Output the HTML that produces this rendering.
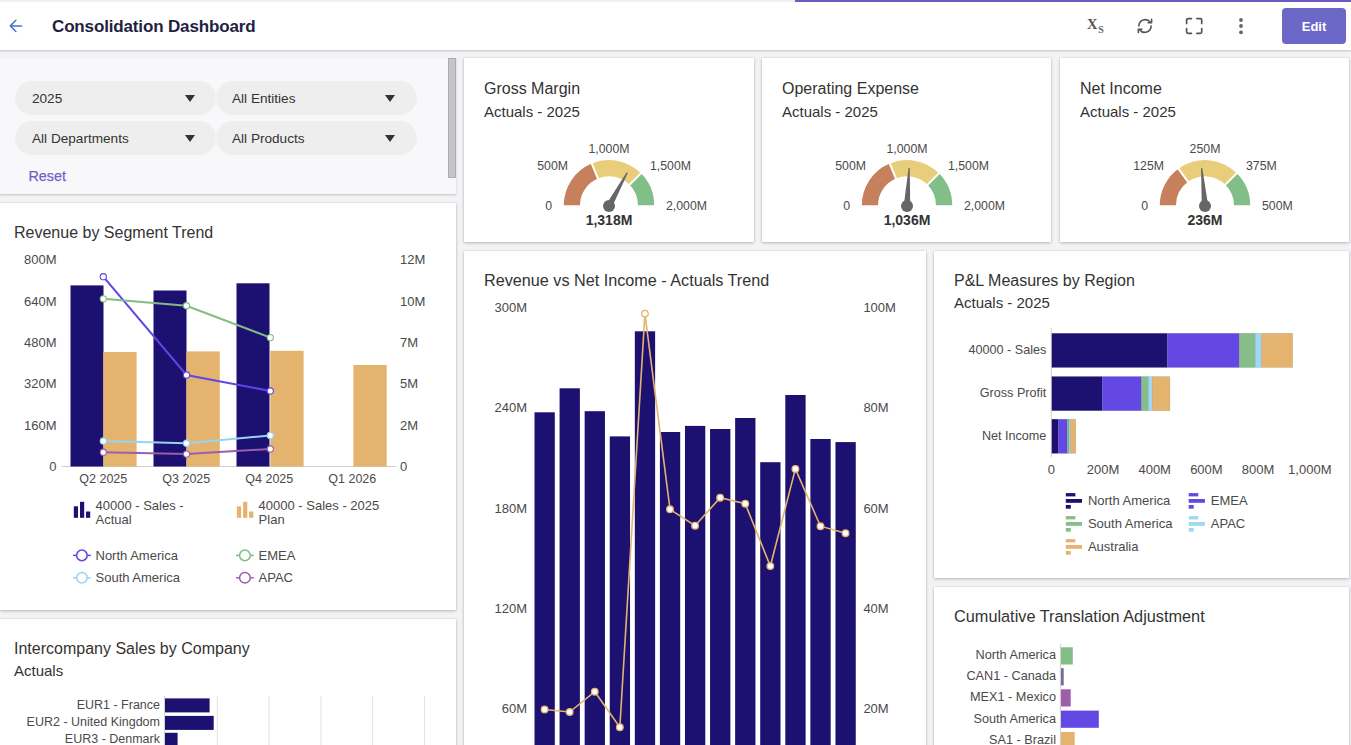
<!DOCTYPE html>
<html><head><meta charset="utf-8"><style>
html,body{margin:0;padding:0}
body{width:1351px;height:745px;overflow:hidden;background:#f3f3f5;font-family:"Liberation Sans", sans-serif;position:relative}
.card{position:absolute;background:#fff;box-shadow:0 1px 3px rgba(0,0,0,.24),0 0 1px rgba(0,0,0,.14)}
.hdr{position:absolute;left:0;top:0;width:1351px;height:50px;background:#fff;box-shadow:0 1px 2px rgba(0,0,0,.2)}
.strip{position:absolute;left:0;top:0;width:1351px;height:2px;background:#f0f0f0}
.prog{position:absolute;left:795px;top:0;width:556px;height:2px;background:#6d5cc4}
.panel{position:absolute;left:0;top:58px;width:456px;height:136px;background:#f8f8fa;box-shadow:0 1px 2px rgba(0,0,0,.2)}
.pill{position:absolute;height:34px;border-radius:17px;background:#eeeeee}
.tri{position:absolute;width:0;height:0;border-left:5.5px solid transparent;border-right:5.5px solid transparent;border-top:7px solid #333}
.sb{position:absolute;left:448px;top:58px;width:8px;height:120px;background:#c6c6c8;border:1px solid #adadaf;box-sizing:border-box}
.btn{position:absolute;left:1282px;top:8px;width:64px;height:36px;background:#6c68c8;border-radius:4px;color:#fff;font-weight:bold;font-size:13px;line-height:37.5px;text-align:center}
.ttl{position:absolute;left:52px;top:16.8px;font-size:17px;font-weight:bold;color:#1f1f3f;white-space:nowrap;letter-spacing:-0.15px}
.reset{position:absolute;left:28.5px;top:167.8px;font-size:14.3px;color:#6b63c9;-webkit-text-stroke:0.25px #6b63c9}
svg text{font-family:"Liberation Sans", sans-serif}
</style></head><body>
<div class="hdr"></div><div class="strip"></div><div class="prog"></div>
<svg style="position:absolute;left:0;top:0" width="60" height="50">
<path d="M21.6,25.9 H10.6 M15.9,20.3 L10.3,25.9 L15.9,31.5" fill="none" stroke="#4f6fd1" stroke-width="1.5" stroke-linecap="round" stroke-linejoin="round"/>
</svg>
<div class="ttl">Consolidation Dashboard</div>
<svg style="position:absolute;left:1080px;top:0" width="200" height="50">
<text x="7" y="29" style="font-family:'Liberation Serif'" font-weight="bold" font-size="14.5" fill="#555">X</text>
<text x="18.3" y="32.8" style="font-family:'Liberation Serif'" font-weight="bold" font-size="10" fill="#666">S</text>
<g fill="none" stroke="#555" stroke-width="1.6" stroke-linecap="round" stroke-linejoin="round">
<path d="M58.9,26 A6.3,6.3 0 0 1 70.3,22.3"/><path d="M71.1,26 A6.3,6.3 0 0 1 59.7,29.7"/>
<path d="M71.6,19.4 V22.8 H68.2"/><path d="M58.4,32.6 V29.2 H61.8"/>
</g>
<g fill="none" stroke="#555" stroke-width="1.7" stroke-linecap="round" stroke-linejoin="round">
<path d="M106.6,23.4 V19.9 Q106.6,18.6 107.9,18.6 H111.4 M116.9,18.6 H120.4 Q121.7,18.6 121.7,19.9 V23.4 M121.7,28.6 V32.1 Q121.7,33.4 120.4,33.4 H116.9 M111.4,33.4 H107.9 Q106.6,33.4 106.6,32.1 V28.6"/>
</g>
<g fill="#666"><circle cx="161" cy="20" r="1.9"/><circle cx="161" cy="26" r="1.9"/><circle cx="161" cy="32.3" r="1.9"/></g>
</svg>
<div class="btn">Edit</div>
<div class="panel"></div>
<div class="sb"></div>
<div class="pill" style="left:15px;top:81px;width:201px"></div>
<div class="pill" style="left:216px;top:81px;width:201px"></div>
<div class="pill" style="left:15px;top:121px;width:201px"></div>
<div class="pill" style="left:216px;top:121px;width:201px"></div>
<div class="tri" style="left:184.5px;top:95px"></div>
<div class="tri" style="left:384.5px;top:95px"></div>
<div class="tri" style="left:184.5px;top:135px"></div>
<div class="tri" style="left:384.5px;top:135px"></div>
<div class="reset">Reset</div>
<div class="card" style="left:0px;top:203px;width:456px;height:407px"></div><div class="card" style="left:0px;top:619px;width:456px;height:200px"></div><div class="card" style="left:464px;top:58px;width:290px;height:184px"></div><div class="card" style="left:762px;top:58px;width:289px;height:184px"></div><div class="card" style="left:1060px;top:58px;width:289px;height:184px"></div><div class="card" style="left:464px;top:251px;width:462px;height:600px"></div><div class="card" style="left:934px;top:251px;width:415px;height:327px"></div><div class="card" style="left:934px;top:587px;width:415px;height:300px"></div>
<svg style="position:absolute;left:0;top:0" width="1351" height="745">
<path d="M563.80,205.30 A45.2,45.2 0 0 1 591.70,163.54 L597.90,178.51 A29,29 0 0 0 580.00,205.30 Z" fill="#c6805b"/><path d="M591.70,163.54 A45.2,45.2 0 0 1 640.96,173.34 L629.51,184.79 A29,29 0 0 0 597.90,178.51 Z" fill="#e8ce7a"/><path d="M640.96,173.34 A45.2,45.2 0 0 1 654.20,205.30 L638.00,205.30 A29,29 0 0 0 629.51,184.79 Z" fill="#82bf88"/><line x1="598.28" y1="179.43" x2="591.32" y2="162.62" stroke="#fff" stroke-width="2"/><line x1="628.80" y1="185.50" x2="641.67" y2="172.63" stroke="#fff" stroke-width="2"/><path d="M606.19,204.47 L626.68,172.36 L627.73,172.93 L611.81,207.53 Z" fill="#666"/><circle cx="609" cy="206" r="6" fill="#666"/><text x="552" y="210" font-size="12.3" fill="#4a4a4a" text-anchor="end" font-weight="normal" >0</text><text x="568" y="170" font-size="12.3" fill="#4a4a4a" text-anchor="end" font-weight="normal" >500M</text><text x="609" y="153" font-size="12.3" fill="#4a4a4a" text-anchor="middle" font-weight="normal" >1,000M</text><text x="650" y="170" font-size="12.3" fill="#4a4a4a" text-anchor="start" font-weight="normal" >1,500M</text><text x="666" y="210" font-size="12.3" fill="#4a4a4a" text-anchor="start" font-weight="normal" >2,000M</text><text x="609" y="225" font-size="14" fill="#333" text-anchor="middle" font-weight="bold" >1,318M</text><path d="M861.80,205.30 A45.2,45.2 0 0 1 889.70,163.54 L895.90,178.51 A29,29 0 0 0 878.00,205.30 Z" fill="#c6805b"/><path d="M889.70,163.54 A45.2,45.2 0 0 1 938.96,173.34 L927.51,184.79 A29,29 0 0 0 895.90,178.51 Z" fill="#e8ce7a"/><path d="M938.96,173.34 A45.2,45.2 0 0 1 952.20,205.30 L936.00,205.30 A29,29 0 0 0 927.51,184.79 Z" fill="#82bf88"/><line x1="896.28" y1="179.43" x2="889.32" y2="162.62" stroke="#fff" stroke-width="2"/><line x1="926.80" y1="185.50" x2="939.67" y2="172.63" stroke="#fff" stroke-width="2"/><path d="M903.81,205.82 L908.55,168.03 L909.75,168.09 L910.19,206.18 Z" fill="#666"/><circle cx="907" cy="206" r="6" fill="#666"/><text x="850" y="210" font-size="12.3" fill="#4a4a4a" text-anchor="end" font-weight="normal" >0</text><text x="866" y="170" font-size="12.3" fill="#4a4a4a" text-anchor="end" font-weight="normal" >500M</text><text x="907" y="153" font-size="12.3" fill="#4a4a4a" text-anchor="middle" font-weight="normal" >1,000M</text><text x="948" y="170" font-size="12.3" fill="#4a4a4a" text-anchor="start" font-weight="normal" >1,500M</text><text x="964" y="210" font-size="12.3" fill="#4a4a4a" text-anchor="start" font-weight="normal" >2,000M</text><text x="907" y="225" font-size="14" fill="#333" text-anchor="middle" font-weight="bold" >1,036M</text><path d="M1159.80,205.30 A45.2,45.2 0 0 1 1178.43,168.73 L1187.95,181.84 A29,29 0 0 0 1176.00,205.30 Z" fill="#c6805b"/><path d="M1178.43,168.73 A45.2,45.2 0 0 1 1236.76,173.14 L1225.38,184.67 A29,29 0 0 0 1187.95,181.84 Z" fill="#e8ce7a"/><path d="M1236.76,173.14 A45.2,45.2 0 0 1 1250.20,205.30 L1234.00,205.30 A29,29 0 0 0 1225.38,184.67 Z" fill="#82bf88"/><line x1="1188.54" y1="182.65" x2="1177.84" y2="167.92" stroke="#fff" stroke-width="2"/><line x1="1224.67" y1="185.38" x2="1237.46" y2="172.43" stroke="#fff" stroke-width="2"/><path d="M1201.81,206.28 L1201.06,168.20 L1202.26,168.09 L1208.19,205.72 Z" fill="#666"/><circle cx="1205" cy="206" r="6" fill="#666"/><text x="1148" y="210" font-size="12.3" fill="#4a4a4a" text-anchor="end" font-weight="normal" >0</text><text x="1164" y="170" font-size="12.3" fill="#4a4a4a" text-anchor="end" font-weight="normal" >125M</text><text x="1205" y="153" font-size="12.3" fill="#4a4a4a" text-anchor="middle" font-weight="normal" >250M</text><text x="1246" y="170" font-size="12.3" fill="#4a4a4a" text-anchor="start" font-weight="normal" >375M</text><text x="1262" y="210" font-size="12.3" fill="#4a4a4a" text-anchor="start" font-weight="normal" >500M</text><text x="1205" y="225" font-size="14" fill="#333" text-anchor="middle" font-weight="bold" >236M</text><text x="56.5" y="471.1" font-size="13" fill="#4a4a4a" text-anchor="end" font-weight="normal" >0</text><text x="400" y="471.1" font-size="13" fill="#4a4a4a" text-anchor="start" font-weight="normal" >0</text><text x="56.5" y="429.74" font-size="13" fill="#4a4a4a" text-anchor="end" font-weight="normal" >160M</text><text x="400" y="429.74" font-size="13" fill="#4a4a4a" text-anchor="start" font-weight="normal" >2M</text><text x="56.5" y="388.38" font-size="13" fill="#4a4a4a" text-anchor="end" font-weight="normal" >320M</text><text x="400" y="388.38" font-size="13" fill="#4a4a4a" text-anchor="start" font-weight="normal" >5M</text><text x="56.5" y="347.02" font-size="13" fill="#4a4a4a" text-anchor="end" font-weight="normal" >480M</text><text x="400" y="347.02" font-size="13" fill="#4a4a4a" text-anchor="start" font-weight="normal" >7M</text><text x="56.5" y="305.66" font-size="13" fill="#4a4a4a" text-anchor="end" font-weight="normal" >640M</text><text x="400" y="305.66" font-size="13" fill="#4a4a4a" text-anchor="start" font-weight="normal" >10M</text><text x="56.5" y="264.3" font-size="13" fill="#4a4a4a" text-anchor="end" font-weight="normal" >800M</text><text x="400" y="264.3" font-size="13" fill="#4a4a4a" text-anchor="start" font-weight="normal" >12M</text><line x1="61.5" y1="466.5" x2="396" y2="466.5" stroke="#cfcfcf" stroke-width="1" /><rect x="70.50" y="285.40" width="33.00" height="181.10" fill="#1c1070" /><rect x="153.50" y="290.50" width="33.00" height="176.00" fill="#1c1070" /><rect x="236.50" y="283.30" width="33.00" height="183.20" fill="#1c1070" /><rect x="103.30" y="352.00" width="33.30" height="114.50" fill="#e4b46f" /><rect x="186.50" y="351.40" width="33.30" height="115.10" fill="#e4b46f" /><rect x="270.30" y="350.80" width="33.30" height="115.70" fill="#e4b46f" /><rect x="353.40" y="365.00" width="33.30" height="101.50" fill="#e4b46f" /><polyline points="103.3,276.7 186.5,375 270.3,391" fill="none" stroke="#5f46e6" stroke-width="2"/><circle cx="103.3" cy="276.7" r="3.1" fill="#fff" stroke="#5f46e6" stroke-width="1.1"/><circle cx="186.5" cy="375" r="3.1" fill="#fff" stroke="#5f46e6" stroke-width="1.1"/><circle cx="270.3" cy="391" r="3.1" fill="#fff" stroke="#5f46e6" stroke-width="1.1"/><polyline points="103.3,298.8 186.5,305.7 270.3,337.6" fill="none" stroke="#80bd82" stroke-width="2"/><circle cx="103.3" cy="298.8" r="3.1" fill="#fff" stroke="#80bd82" stroke-width="1.1"/><circle cx="186.5" cy="305.7" r="3.1" fill="#fff" stroke="#80bd82" stroke-width="1.1"/><circle cx="270.3" cy="337.6" r="3.1" fill="#fff" stroke="#80bd82" stroke-width="1.1"/><polyline points="103.3,441 186.5,443.2 270.3,435.5" fill="none" stroke="#96d4f4" stroke-width="2"/><circle cx="103.3" cy="441" r="3.1" fill="#fff" stroke="#96d4f4" stroke-width="1.1"/><circle cx="186.5" cy="443.2" r="3.1" fill="#fff" stroke="#96d4f4" stroke-width="1.1"/><circle cx="270.3" cy="435.5" r="3.1" fill="#fff" stroke="#96d4f4" stroke-width="1.1"/><polyline points="103.3,452.2 186.5,454.1 270.3,449" fill="none" stroke="#9c5cb0" stroke-width="2"/><circle cx="103.3" cy="452.2" r="3.1" fill="#fff" stroke="#9c5cb0" stroke-width="1.1"/><circle cx="186.5" cy="454.1" r="3.1" fill="#fff" stroke="#9c5cb0" stroke-width="1.1"/><circle cx="270.3" cy="449" r="3.1" fill="#fff" stroke="#9c5cb0" stroke-width="1.1"/><text x="103.3" y="483" font-size="12.5" fill="#4a4a4a" text-anchor="middle" font-weight="normal" >Q2 2025</text><text x="186.3" y="483" font-size="12.5" fill="#4a4a4a" text-anchor="middle" font-weight="normal" >Q3 2025</text><text x="269.3" y="483" font-size="12.5" fill="#4a4a4a" text-anchor="middle" font-weight="normal" >Q4 2025</text><text x="352.3" y="483" font-size="12.5" fill="#4a4a4a" text-anchor="middle" font-weight="normal" >Q1 2026</text><rect x="73.80" y="506.30" width="4.20" height="11.50" fill="#1c1070" /><rect x="80.00" y="501.80" width="4.20" height="16.00" fill="#1c1070" /><rect x="86.00" y="511.50" width="4.20" height="6.30" fill="#1c1070" /><text x="95.5" y="509.8" font-size="13" fill="#4a4a4a" text-anchor="start" font-weight="normal" >40000 - Sales -</text><text x="95.5" y="523.7" font-size="13" fill="#4a4a4a" text-anchor="start" font-weight="normal" >Actual</text><rect x="236.90" y="506.30" width="4.20" height="11.50" fill="#e4b46f" /><rect x="243.10" y="501.80" width="4.20" height="16.00" fill="#e4b46f" /><rect x="249.10" y="511.50" width="4.20" height="6.30" fill="#e4b46f" /><text x="258.6" y="509.8" font-size="13" fill="#4a4a4a" text-anchor="start" font-weight="normal" >40000 - Sales - 2025</text><text x="258.6" y="523.7" font-size="13" fill="#4a4a4a" text-anchor="start" font-weight="normal" >Plan</text><line x1="73" y1="555.4" x2="90.8" y2="555.4" stroke="#5f46e6" stroke-width="1.5" /><circle cx="81.9" cy="555.4" r="5.3" fill="#fff" stroke="#5f46e6" stroke-width="1.5"/><text x="95.5" y="559.9" font-size="13" fill="#4a4a4a" text-anchor="start" font-weight="normal" >North America</text><line x1="236" y1="555.4" x2="253.8" y2="555.4" stroke="#80bd82" stroke-width="1.5" /><circle cx="244.9" cy="555.4" r="5.3" fill="#fff" stroke="#80bd82" stroke-width="1.5"/><text x="258.5" y="559.9" font-size="13" fill="#4a4a4a" text-anchor="start" font-weight="normal" >EMEA</text><line x1="73" y1="577.8" x2="90.8" y2="577.8" stroke="#96d4f4" stroke-width="1.5" /><circle cx="81.9" cy="577.8" r="5.3" fill="#fff" stroke="#96d4f4" stroke-width="1.5"/><text x="95.5" y="582.3" font-size="13" fill="#4a4a4a" text-anchor="start" font-weight="normal" >South America</text><line x1="236" y1="577.8" x2="253.8" y2="577.8" stroke="#9c5cb0" stroke-width="1.5" /><circle cx="244.9" cy="577.8" r="5.3" fill="#fff" stroke="#9c5cb0" stroke-width="1.5"/><text x="258.5" y="582.3" font-size="13" fill="#4a4a4a" text-anchor="start" font-weight="normal" >APAC</text><line x1="217.3" y1="696" x2="217.3" y2="745" stroke="#e3e3e3" stroke-width="1" /><line x1="269.1" y1="696" x2="269.1" y2="745" stroke="#e3e3e3" stroke-width="1" /><line x1="320.9" y1="696" x2="320.9" y2="745" stroke="#e3e3e3" stroke-width="1" /><line x1="372.7" y1="696" x2="372.7" y2="745" stroke="#e3e3e3" stroke-width="1" /><line x1="424.5" y1="696" x2="424.5" y2="745" stroke="#e3e3e3" stroke-width="1" /><line x1="164.5" y1="696" x2="164.5" y2="745" stroke="#cfcfcf" stroke-width="1" /><rect x="165.00" y="698.40" width="44.60" height="14.00" fill="#1c1070" /><text x="160" y="708.6999999999999" font-size="12.5" fill="#4a4a4a" text-anchor="end" font-weight="normal" >EUR1 - France</text><rect x="165.00" y="715.90" width="48.70" height="14.00" fill="#1c1070" /><text x="160" y="726.1999999999999" font-size="12.5" fill="#4a4a4a" text-anchor="end" font-weight="normal" >EUR2 - United Kingdom</text><rect x="165.00" y="732.80" width="12.60" height="14.00" fill="#1c1070" /><text x="160" y="743.0999999999999" font-size="12.5" fill="#4a4a4a" text-anchor="end" font-weight="normal" >EUR3 - Denmark</text><text x="527" y="312.3" font-size="13" fill="#4a4a4a" text-anchor="end" font-weight="normal" >300M</text><text x="863.4" y="312.3" font-size="13" fill="#4a4a4a" text-anchor="start" font-weight="normal" >100M</text><text x="527" y="412.4" font-size="13" fill="#4a4a4a" text-anchor="end" font-weight="normal" >240M</text><text x="863.4" y="412.4" font-size="13" fill="#4a4a4a" text-anchor="start" font-weight="normal" >80M</text><text x="527" y="512.5" font-size="13" fill="#4a4a4a" text-anchor="end" font-weight="normal" >180M</text><text x="863.4" y="512.5" font-size="13" fill="#4a4a4a" text-anchor="start" font-weight="normal" >60M</text><text x="527" y="612.6" font-size="13" fill="#4a4a4a" text-anchor="end" font-weight="normal" >120M</text><text x="863.4" y="612.6" font-size="13" fill="#4a4a4a" text-anchor="start" font-weight="normal" >40M</text><text x="527" y="712.6999999999999" font-size="13" fill="#4a4a4a" text-anchor="end" font-weight="normal" >60M</text><text x="863.4" y="712.6999999999999" font-size="13" fill="#4a4a4a" text-anchor="start" font-weight="normal" >20M</text><rect x="534.50" y="412.30" width="20.30" height="332.70" fill="#1c1070" /><rect x="559.58" y="388.30" width="20.30" height="356.70" fill="#1c1070" /><rect x="584.66" y="411.20" width="20.30" height="333.80" fill="#1c1070" /><rect x="609.74" y="436.40" width="20.30" height="308.60" fill="#1c1070" /><rect x="634.82" y="331.30" width="20.30" height="413.70" fill="#1c1070" /><rect x="659.90" y="432.00" width="20.30" height="313.00" fill="#1c1070" /><rect x="684.98" y="425.90" width="20.30" height="319.10" fill="#1c1070" /><rect x="710.06" y="429.00" width="20.30" height="316.00" fill="#1c1070" /><rect x="735.14" y="418.00" width="20.30" height="327.00" fill="#1c1070" /><rect x="760.22" y="462.20" width="20.30" height="282.80" fill="#1c1070" /><rect x="785.30" y="395.00" width="20.30" height="350.00" fill="#1c1070" /><rect x="810.38" y="439.00" width="20.30" height="306.00" fill="#1c1070" /><rect x="835.46" y="442.10" width="20.30" height="302.90" fill="#1c1070" /><polyline points="544.60,709.5 569.68,712 594.76,691.7 619.84,727.2 644.92,313.6 670.00,509.3 695.08,525.7 720.16,497.7 745.24,503.7 770.32,566.1 795.40,468.9 820.48,526.2 845.56,533.2" fill="none" stroke="#e4b46f" stroke-width="1.6"/><circle cx="544.60" cy="709.5" r="3.3" fill="#fff" stroke="#e4b46f" stroke-width="1.3"/><circle cx="569.68" cy="712" r="3.3" fill="#fff" stroke="#e4b46f" stroke-width="1.3"/><circle cx="594.76" cy="691.7" r="3.3" fill="#fff" stroke="#e4b46f" stroke-width="1.3"/><circle cx="619.84" cy="727.2" r="3.3" fill="#fff" stroke="#e4b46f" stroke-width="1.3"/><circle cx="644.92" cy="313.6" r="3.3" fill="#fff" stroke="#e4b46f" stroke-width="1.3"/><circle cx="670.00" cy="509.3" r="3.3" fill="#fff" stroke="#e4b46f" stroke-width="1.3"/><circle cx="695.08" cy="525.7" r="3.3" fill="#fff" stroke="#e4b46f" stroke-width="1.3"/><circle cx="720.16" cy="497.7" r="3.3" fill="#fff" stroke="#e4b46f" stroke-width="1.3"/><circle cx="745.24" cy="503.7" r="3.3" fill="#fff" stroke="#e4b46f" stroke-width="1.3"/><circle cx="770.32" cy="566.1" r="3.3" fill="#fff" stroke="#e4b46f" stroke-width="1.3"/><circle cx="795.40" cy="468.9" r="3.3" fill="#fff" stroke="#e4b46f" stroke-width="1.3"/><circle cx="820.48" cy="526.2" r="3.3" fill="#fff" stroke="#e4b46f" stroke-width="1.3"/><circle cx="845.56" cy="533.2" r="3.3" fill="#fff" stroke="#e4b46f" stroke-width="1.3"/><line x1="1051.3" y1="328" x2="1051.3" y2="457.5" stroke="#cfcfcf" stroke-width="1" /><rect x="1051.80" y="333.30" width="115.50" height="34.20" fill="#1c1070" stroke="rgba(60,60,60,0.18)" stroke-width="0.6"/><rect x="1167.30" y="333.30" width="72.00" height="34.20" fill="#6448e4" stroke="rgba(60,60,60,0.18)" stroke-width="0.6"/><rect x="1239.30" y="333.30" width="16.10" height="34.20" fill="#86bd89" stroke="rgba(60,60,60,0.18)" stroke-width="0.6"/><rect x="1255.40" y="333.30" width="6.00" height="34.20" fill="#9fd7f6" stroke="rgba(60,60,60,0.18)" stroke-width="0.6"/><rect x="1261.40" y="333.30" width="31.30" height="34.20" fill="#e4b46f" stroke="rgba(60,60,60,0.18)" stroke-width="0.6"/><text x="1046.3" y="354.1" font-size="12.6" fill="#4a4a4a" text-anchor="end" font-weight="normal" >40000 - Sales</text><rect x="1051.80" y="376.50" width="50.40" height="34.20" fill="#1c1070" stroke="rgba(60,60,60,0.18)" stroke-width="0.6"/><rect x="1102.20" y="376.50" width="39.30" height="34.20" fill="#6448e4" stroke="rgba(60,60,60,0.18)" stroke-width="0.6"/><rect x="1141.50" y="376.50" width="6.90" height="34.20" fill="#86bd89" stroke="rgba(60,60,60,0.18)" stroke-width="0.6"/><rect x="1148.40" y="376.50" width="3.90" height="34.20" fill="#9fd7f6" stroke="rgba(60,60,60,0.18)" stroke-width="0.6"/><rect x="1152.30" y="376.50" width="17.60" height="34.20" fill="#e4b46f" stroke="rgba(60,60,60,0.18)" stroke-width="0.6"/><text x="1046.3" y="397.1" font-size="12.6" fill="#4a4a4a" text-anchor="end" font-weight="normal" >Gross Profit</text><rect x="1051.80" y="419.20" width="6.40" height="34.20" fill="#1c1070" stroke="rgba(60,60,60,0.18)" stroke-width="0.6"/><rect x="1058.20" y="419.20" width="9.00" height="34.20" fill="#6448e4" stroke="rgba(60,60,60,0.18)" stroke-width="0.6"/><rect x="1067.20" y="419.20" width="1.80" height="34.20" fill="#86bd89" stroke="rgba(60,60,60,0.18)" stroke-width="0.6"/><rect x="1069.00" y="419.20" width="1.50" height="34.20" fill="#9fd7f6" stroke="rgba(60,60,60,0.18)" stroke-width="0.6"/><rect x="1070.50" y="419.20" width="5.30" height="34.20" fill="#e4b46f" stroke="rgba(60,60,60,0.18)" stroke-width="0.6"/><text x="1046.3" y="440.1" font-size="12.6" fill="#4a4a4a" text-anchor="end" font-weight="normal" >Net Income</text><text x="1051.3" y="473.6" font-size="13" fill="#4a4a4a" text-anchor="middle" font-weight="normal" >0</text><text x="1103.0" y="473.6" font-size="13" fill="#4a4a4a" text-anchor="middle" font-weight="normal" >200M</text><text x="1154.7" y="473.6" font-size="13" fill="#4a4a4a" text-anchor="middle" font-weight="normal" >400M</text><text x="1206.4" y="473.6" font-size="13" fill="#4a4a4a" text-anchor="middle" font-weight="normal" >600M</text><text x="1258.1" y="473.6" font-size="13" fill="#4a4a4a" text-anchor="middle" font-weight="normal" >800M</text><text x="1309.8" y="473.6" font-size="13" fill="#4a4a4a" text-anchor="middle" font-weight="normal" >1,000M</text><rect x="1065.80" y="493.10" width="9.60" height="3.30" fill="#1c1070" /><rect x="1065.80" y="499.00" width="16.20" height="3.80" fill="#1c1070" /><rect x="1065.80" y="505.00" width="5.00" height="3.70" fill="#1c1070" /><text x="1087.8999999999999" y="505.1" font-size="13" fill="#4a4a4a" text-anchor="start" font-weight="normal" >North America</text><rect x="1188.70" y="493.10" width="9.60" height="3.30" fill="#6448e4" /><rect x="1188.70" y="499.00" width="16.20" height="3.80" fill="#6448e4" /><rect x="1188.70" y="505.00" width="5.00" height="3.70" fill="#6448e4" /><text x="1210.8" y="505.1" font-size="13" fill="#4a4a4a" text-anchor="start" font-weight="normal" >EMEA</text><rect x="1065.80" y="516.10" width="9.60" height="3.30" fill="#86bd89" /><rect x="1065.80" y="522.00" width="16.20" height="3.80" fill="#86bd89" /><rect x="1065.80" y="528.00" width="5.00" height="3.70" fill="#86bd89" /><text x="1087.8999999999999" y="528.1" font-size="13" fill="#4a4a4a" text-anchor="start" font-weight="normal" >South America</text><rect x="1188.70" y="516.10" width="9.60" height="3.30" fill="#9fd7f6" /><rect x="1188.70" y="522.00" width="16.20" height="3.80" fill="#9fd7f6" /><rect x="1188.70" y="528.00" width="5.00" height="3.70" fill="#9fd7f6" /><text x="1210.8" y="528.1" font-size="13" fill="#4a4a4a" text-anchor="start" font-weight="normal" >APAC</text><rect x="1065.80" y="539.10" width="9.60" height="3.30" fill="#e4b46f" /><rect x="1065.80" y="545.00" width="16.20" height="3.80" fill="#e4b46f" /><rect x="1065.80" y="551.00" width="5.00" height="3.70" fill="#e4b46f" /><text x="1087.8999999999999" y="551.1" font-size="13" fill="#4a4a4a" text-anchor="start" font-weight="normal" >Australia</text><line x1="1060.4" y1="644" x2="1060.4" y2="745" stroke="#cfcfcf" stroke-width="1" /><rect x="1061.00" y="647.30" width="11.80" height="17.20" fill="#84bd86" /><text x="1056" y="659.1999999999999" font-size="12.7" fill="#4a4a4a" text-anchor="end" font-weight="normal" >North America</text><rect x="1061.00" y="668.20" width="2.70" height="17.20" fill="#6e7099" /><text x="1056" y="680.1" font-size="12.7" fill="#4a4a4a" text-anchor="end" font-weight="normal" >CAN1 - Canada</text><rect x="1061.00" y="689.30" width="9.70" height="17.20" fill="#9c5fa8" /><text x="1056" y="701.1999999999999" font-size="12.7" fill="#4a4a4a" text-anchor="end" font-weight="normal" >MEX1 - Mexico</text><rect x="1061.00" y="710.60" width="37.80" height="17.20" fill="#6448e4" /><text x="1056" y="722.5" font-size="12.7" fill="#4a4a4a" text-anchor="end" font-weight="normal" >South America</text><rect x="1061.00" y="732.00" width="13.70" height="17.20" fill="#e4b46f" /><text x="1056" y="743.9" font-size="12.7" fill="#4a4a4a" text-anchor="end" font-weight="normal" >SA1 - Brazil</text><text x="484" y="94" font-size="16" fill="#333333" text-anchor="start" font-weight="normal" >Gross Margin</text><text x="484" y="116.5" font-size="15" fill="#333333" text-anchor="start" font-weight="normal" >Actuals - 2025</text><text x="782" y="94" font-size="16" fill="#333333" text-anchor="start" font-weight="normal" >Operating Expense</text><text x="782" y="116.5" font-size="15" fill="#333333" text-anchor="start" font-weight="normal" >Actuals - 2025</text><text x="1080" y="94" font-size="16" fill="#333333" text-anchor="start" font-weight="normal" >Net Income</text><text x="1080" y="116.5" font-size="15" fill="#333333" text-anchor="start" font-weight="normal" >Actuals - 2025</text><text x="14" y="238" font-size="16" fill="#333333" text-anchor="start" font-weight="normal" >Revenue by Segment Trend</text><text x="14" y="654.2" font-size="16" fill="#333333" text-anchor="start" font-weight="normal" >Intercompany Sales by Company</text><text x="14" y="676.2" font-size="15" fill="#333333" text-anchor="start" font-weight="normal" >Actuals</text><text x="484" y="286" font-size="16.2" fill="#333333" text-anchor="start" font-weight="normal" >Revenue vs Net Income - Actuals Trend</text><text x="954" y="285.7" font-size="16" fill="#333333" text-anchor="start" font-weight="normal" >P&amp;L Measures by Region</text><text x="954" y="308.2" font-size="15" fill="#333333" text-anchor="start" font-weight="normal" >Actuals - 2025</text><text x="954" y="622" font-size="16.3" fill="#333333" text-anchor="start" font-weight="normal" >Cumulative Translation Adjustment</text><text x="32" y="103" font-size="13.6" fill="#333333" text-anchor="start" font-weight="normal" >2025</text><text x="232" y="103" font-size="13.6" fill="#333333" text-anchor="start" font-weight="normal" >All Entities</text><text x="32" y="143" font-size="13.6" fill="#333333" text-anchor="start" font-weight="normal" >All Departments</text><text x="232" y="143" font-size="13.6" fill="#333333" text-anchor="start" font-weight="normal" >All Products</text>
</svg>
</body></html>
